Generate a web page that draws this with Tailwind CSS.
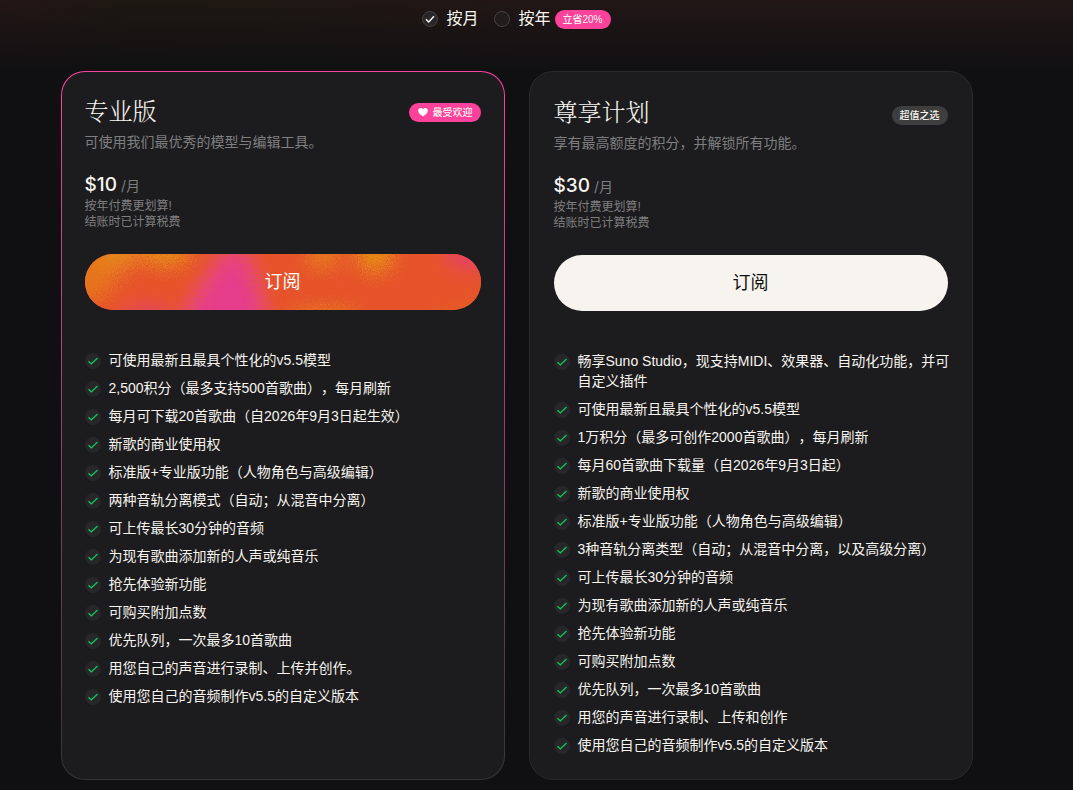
<!DOCTYPE html>
<html lang="zh-CN">
<head>
  <meta charset="UTF-8" />
  <meta name="viewport" content="width=device-width, initial-scale=1.0"/>
  <title>订阅计划</title>
  <script src="https://cdn.jsdelivr.net/npm/@tailwindcss/browser@4"></script>
</head>
<body class="min-h-screen bg-[#101012] bg-[linear-gradient(to_bottom,#10101200,#101012_72px),linear-gradient(to_right,#241616,#1e1812_12%,#1f1813_24%,#221616_50%)] font-['Liberation_Sans','Noto_Sans_CJK_SC',sans-serif] text-[#f7f4ef] [text-spacing-trim:space-all]">

  <main class="pt-[7px] pb-2 pl-5 pr-15">

    <!-- Billing period -->
    <form class="flex h-6 items-center justify-center gap-4">
      <label class="flex items-center gap-2 text-base">
        <span class="grid size-4">
          <input type="radio" name="billing" value="monthly" checked class="peer col-start-1 row-start-1 size-4 appearance-none rounded-full border border-[#454142] bg-[#2a2627]" />
          <svg viewBox="0 0 16 16" class="pointer-events-none invisible col-start-1 row-start-1 size-4 peer-checked:visible" fill="none" stroke="#ffffff" stroke-width="1.4"><path d="M4 8.2l2.7 2.7L12 5.2"/></svg>
        </span>
        按月
      </label>
      <label class="flex items-center gap-2 text-base">
        <span class="grid size-4">
          <input type="radio" name="billing" value="yearly" class="peer col-start-1 row-start-1 size-4 appearance-none rounded-full border border-[#454142] bg-[#231c1c]" />
          <svg viewBox="0 0 16 16" class="pointer-events-none invisible col-start-1 row-start-1 size-4 peer-checked:visible" fill="none" stroke="#ffffff" stroke-width="1.4"><path d="M4 8.2l2.7 2.7L12 5.2"/></svg>
        </span>
        <span class="flex items-center gap-1">按年
          <span class="flex h-[19px] items-center rounded-full bg-[#fd429c] px-2 text-[10px] font-medium">立省20%</span>
        </span>
      </label>
    </form>

    <!-- Plans -->
    <div class="mx-auto mt-10 grid max-w-[912px] gap-6 sm:grid-cols-2">

      <!-- Pro -->
      <section class="flex rounded-3xl bg-linear-to-b from-[#fd429c] to-[#343436] p-px">
        <div class="flex-1 rounded-[23px] bg-[#1c1c1e] p-[23px]">
          <div class="flex items-center justify-between">
            <h2 class="font-['Liberation_Serif','Noto_Serif_CJK_SC','Noto_Sans_CJK_SC',serif] text-2xl/[34px] font-light">专业版</h2>
            <span class="flex h-[19px] items-center gap-1 rounded-full bg-[#fd429c] px-2 text-[10px] font-medium">
              <svg viewBox="0 0 12 12" class="size-3" fill="#ffffff"><path d="M6 10.6C3.2 8.7 1.2 6.9 1.2 4.6 1.2 3 2.3 1.9 3.7 1.9 4.7 1.9 5.5 2.4 6 3.2 6.5 2.4 7.3 1.9 8.3 1.9 9.7 1.9 10.8 3 10.8 4.6 10.8 6.9 8.8 8.7 6 10.6Z"/></svg>
              最受欢迎
            </span>
          </div>
          <p class="mt-[3px] text-sm text-[#7f7f80]">可使用我们最优秀的模型与编辑工具。</p>
          <p class="mt-5 flex items-baseline gap-1 font-['Inter','Noto_Sans_CJK_SC',sans-serif] text-[19px]/[26px] font-medium">$10 <span class="text-sm font-normal text-[#7f7f80]">/月</span></p>
          <p class="text-xs text-[#7f7f80]">按年付费更划算!<br />结账时已计算税费</p>
          <button type="button" class="mt-6 grid h-14 w-full overflow-hidden rounded-full bg-[#e6522a] text-lg text-white">
            <svg viewBox="0 0 396 56" preserveAspectRatio="none" class="col-start-1 row-start-1 h-14 w-full" aria-hidden="true">
              <filter id="grain" x="-20%" y="-50%" width="140%" height="200%">
                <feGaussianBlur in="SourceGraphic" stdDeviation="9" result="soft" />
                <feTurbulence type="fractalNoise" baseFrequency="0.8" numOctaves="2" seed="4" result="noise" />
                <feDisplacementMap in="soft" in2="noise" scale="36" xChannelSelector="R" yChannelSelector="G" />
              </filter>
              <g filter="url(#grain)">
                <rect x="-60" y="-60" width="516" height="176" fill="#e6532a" />
                <ellipse cx="0" cy="20" rx="30" ry="28" fill="#e6741e" />
                <ellipse cx="32" cy="-4" rx="20" ry="20" fill="#e6861a" />
                <ellipse cx="80" cy="-6" rx="26" ry="17" fill="#e58a12" />
                <path d="M86 90L112 44 130 16 148 -6 160 0 168 24 176 50 178 90Z" fill="#e63d8c" />
                <ellipse cx="62" cy="64" rx="24" ry="9" fill="#e63d6c" />
                <ellipse cx="238" cy="0" rx="16" ry="14" fill="#e67c1e" />
                <ellipse cx="290" cy="-2" rx="16" ry="19" fill="#e69010" />
                <ellipse cx="238" cy="68" rx="36" ry="12" fill="#e67c1e" />
                <ellipse cx="384" cy="0" rx="22" ry="13" fill="#e63d66" />
                <ellipse cx="385" cy="66" rx="40" ry="14" fill="#e65e26" />
              </g>
            </svg>
            <span class="col-start-1 row-start-1 self-center">订阅</span>
          </button>
          <ul id="proFeatures" class="mt-10 flex flex-col gap-2"></ul>
        </div>
      </section>

      <!-- Premier -->
      <section class="rounded-3xl border border-[#2a2a2c] bg-[#1c1c1e] p-6">
        <div class="flex items-center justify-between">
          <h2 class="font-['Liberation_Serif','Noto_Serif_CJK_SC','Noto_Sans_CJK_SC',serif] text-2xl/[34px] font-light">尊享计划</h2>
          <div class="pt-1">
            <span class="flex h-[19px] items-center rounded-full bg-[#3e3e3f] px-2 text-[10px] font-medium">超值之选</span>
          </div>
        </div>
        <p class="mt-[3px] text-sm text-[#7f7f80]">享有最高额度的积分，并解锁所有功能。</p>
        <p class="mt-5 flex items-baseline gap-1 font-['Inter','Noto_Sans_CJK_SC',sans-serif] text-[19px]/[26px] font-medium">$30 <span class="text-sm font-normal text-[#7f7f80]">/月</span></p>
        <p class="text-xs text-[#7f7f80]">按年付费更划算!<br />结账时已计算税费</p>
        <button type="button" class="mt-6 h-14 w-full rounded-full bg-[#f7f4ef] text-lg text-[#101012]">订阅</button>
        <ul id="premierFeatures" class="-mr-2 mt-10 flex flex-col gap-2"></ul>
      </section>

    </div>
  </main>

  <!-- Script -->
  <script>
    const proFeatures = [
      "可使用最新且最具个性化的v5.5模型",
      "2,500积分（最多支持500首歌曲），每月刷新",
      "每月可下载20首歌曲（自2026年9月3日起生效）",
      "新歌的商业使用权",
      "标准版+专业版功能（人物角色与高级编辑）",
      "两种音轨分离模式（自动；从混音中分离）",
      "可上传最长30分钟的音频",
      "为现有歌曲添加新的人声或纯音乐",
      "抢先体验新功能",
      "可购买附加点数",
      "优先队列，一次最多10首歌曲",
      "用您自己的声音进行录制、上传并创作。",
      "使用您自己的音频制作v5.5的自定义版本"
    ];

    const premierFeatures = [
      "畅享Suno Studio，现支持MIDI、效果器、自动化功能，并可自定义插件",
      "可使用最新且最具个性化的v5.5模型",
      "1万积分（最多可创作2000首歌曲），每月刷新",
      "每月60首歌曲下载量（自2026年9月3日起）",
      "新歌的商业使用权",
      "标准版+专业版功能（人物角色与高级编辑）",
      "3种音轨分离类型（自动；从混音中分离，以及高级分离）",
      "可上传最长30分钟的音频",
      "为现有歌曲添加新的人声或纯音乐",
      "抢先体验新功能",
      "可购买附加点数",
      "优先队列，一次最多10首歌曲",
      "用您的声音进行录制、上传和创作",
      "使用您自己的音频制作v5.5的自定义版本"
    ];

    function renderFeatures(id, features) {
      document.getElementById(id).innerHTML = features.map(feature => `
        <li class="flex items-start gap-2 text-sm">
          <svg viewBox="0 0 16 16" class="mt-[3px] size-4 shrink-0 rounded-full bg-[#272729]" fill="none" stroke="#0ccb5c" stroke-width="1.3"><path d="M3.5 8.2l2.8 2.7L12.5 5"/></svg>
          <span>${feature}</span>
        </li>
      `).join("");
    }

    renderFeatures("proFeatures", proFeatures);
    renderFeatures("premierFeatures", premierFeatures);
  </script>

</body>
</html>
